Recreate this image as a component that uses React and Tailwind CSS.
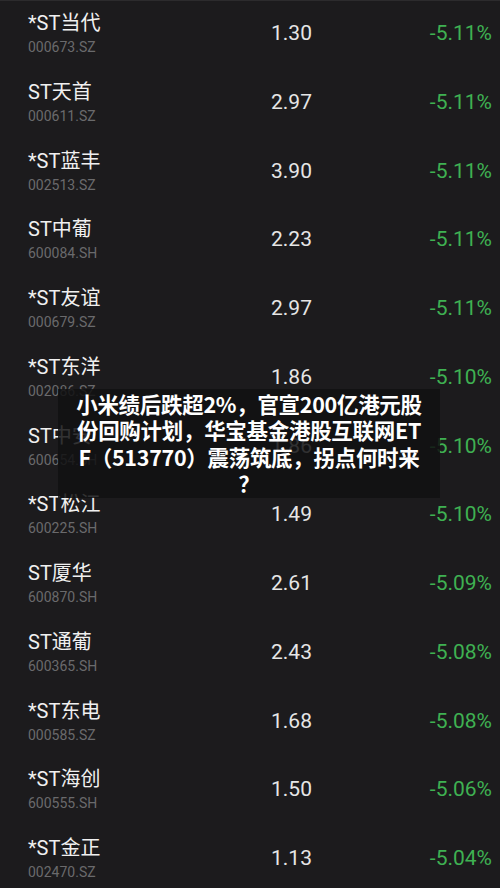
const rows = [
  { name: "*ST当代", code: "000673.SZ", price: "1.30", pct: "-5.11%" },
  { name: "ST天首", code: "000611.SZ", price: "2.97", pct: "-5.11%" },
  { name: "*ST蓝丰", code: "002513.SZ", price: "3.90", pct: "-5.11%" },
  { name: "ST中葡", code: "600084.SH", price: "2.23", pct: "-5.11%" },
  { name: "*ST友谊", code: "000679.SZ", price: "2.97", pct: "-5.11%" },
  { name: "*ST东洋", code: "002086.SZ", price: "1.86", pct: "-5.10%" },
  { name: "ST中安", code: "600654.SH", price: "1.86", pct: "-5.10%" },
  { name: "*ST松江", code: "600225.SH", price: "1.49", pct: "-5.10%" },
  { name: "ST厦华", code: "600870.SH", price: "2.61", pct: "-5.09%" },
  { name: "ST通葡", code: "600365.SH", price: "2.43", pct: "-5.08%" },
  { name: "*ST东电", code: "000585.SZ", price: "1.68", pct: "-5.08%" },
  { name: "*ST海创", code: "600555.SH", price: "1.50", pct: "-5.06%" },
  { name: "*ST金正", code: "002470.SZ", price: "1.13", pct: "-5.04%" },
];

const titleLines = [
  "小米绩后跌超2%，官宣200亿港元股",
  "份回购计划，华宝基金港股互联网ET",
  "F（513770）震荡筑底，拐点何时来",
  "？",
];

const font = { fontFamily: "Roboto, 'Noto Sans CJK SC', sans-serif" };

export default function App() {
  return (
    <div className="relative h-[888px] w-[500px] overflow-hidden bg-[#1c1b1d]" style={font}>
      <div className="h-px bg-[#2c2b2d]" />
      {rows.map((r) => (
        <div key={r.code} className="flex h-[68.75px] items-start pl-[28px] pr-[8px]">
          <div className="flex w-[243px] flex-col pt-[10px]">
            <span className="text-[20px] leading-[24px] text-[#f0f0f0]">{r.name}</span>
            <span className="mt-[3px] text-[14px] leading-[18px] text-[#6a6a6c]">{r.code}</span>
          </div>
          <div className="w-[120px] pt-[19px] text-[21px] leading-[26px] text-[#e6e6e6]">{r.price}</div>
          <div className="flex-1 pt-[19px] text-right text-[21px] leading-[26px] text-[#3fb152]">{r.pct}</div>
        </div>
      ))}
      <div className="absolute left-[58px] top-[389px] flex h-[109px] w-[382px] flex-col items-center justify-center bg-[#111112]/85">
        {titleLines.map((line) => (
          <p
            key={line}
            className="whitespace-nowrap text-center text-[21.5px] font-bold leading-[26.3px] tracking-[-0.3px] text-white"
            style={{ fontFamily: "'Noto Sans CJK SC', sans-serif" }}
          >
            {line}
          </p>
        ))}
      </div>
    </div>
  );
}
